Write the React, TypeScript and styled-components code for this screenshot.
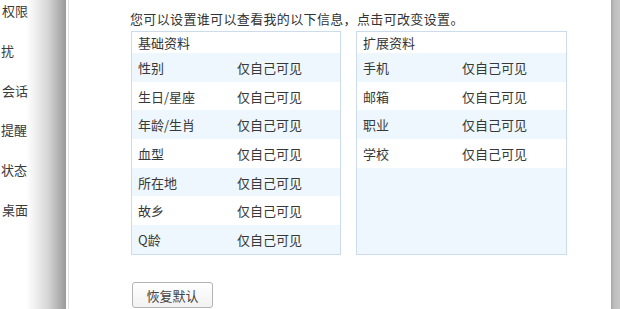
import React from "react";
import styled, { createGlobalStyle } from "styled-components";

const Global = createGlobalStyle`
  html, body { margin: 0; padding: 0; background: #fff; }
  * { box-sizing: border-box; }
`;

const Root = styled.div`
  display: flex;
  width: 620px;
  height: 309px;
  overflow: hidden;
  background: #fff;
  font-family: "Noto Sans CJK SC", "Noto Sans", sans-serif;
  color: #383838;
`;

const Sidebar = styled.div`
  flex: none;
  width: 66px;
  display: flex;
  flex-direction: column;
  margin-top: -9px;
  background: linear-gradient(
    to right,
    #ffffff 0px,
    #ffffff 26px,
    #f2f2f2 34px,
    #d6d6d6 48px,
    #b4b4b4 58px,
    #9a9a9a 66px
  );
`;

const NavItem = styled.div<{ $shift: number }>`
  height: 39.8px;
  line-height: 40px;
  font-size: 13px;
  white-space: nowrap;
  padding-left: ${(p) => p.$shift}px;
  color: #3a3a3a;
`;

const Main = styled.div`
  flex: 1;
  margin-left: 2px;
  border-left: 1px solid #e2e2e2;
  padding: 10px 0 0 61px;
  display: flex;
  flex-direction: column;
`;

const Intro = styled.div`
  font-size: 13px;
  line-height: 17px;
  height: 17px;
  margin-bottom: 4px;
  letter-spacing: 0.35px;
  color: #333;
  white-space: nowrap;
`;

const Tables = styled.div`
  display: grid;
  grid-template-columns: 210px 211px;
  column-gap: 15px;
  margin-left: 1px;
`;

const Table = styled.div`
  height: 224px;
  border: 1px solid #cddcea;
  display: flex;
  flex-direction: column;
  background: #fff;
`;

const Header = styled.div`
  height: 21px;
  line-height: 21px;
  padding-left: 6px;
  font-size: 13px;
  color: #333;
`;

const Row = styled.div<{ $alt: boolean }>`
  display: grid;
  grid-template-columns: 99px 1fr;
  height: 28.7px;
  align-items: center;
  padding-left: 6px;
  font-size: 13px;
  background: ${(p) => (p.$alt ? "#edf7fd" : "#ffffff")};
  cursor: pointer;
`;

const Filler = styled.div`
  flex: 1;
  background: #edf7fd;
`;

const Button = styled.button`
  margin-top: 27px;
  margin-left: 2px;
  width: 81px;
  height: 26px;
  border: 1px solid #b3b3b3;
  border-radius: 3px;
  background: linear-gradient(#ffffff, #f2f2f2);
  font-family: "Noto Sans CJK SC", "Noto Sans", sans-serif;
  font-size: 13px;
  color: #444;
  padding: 0;
  cursor: pointer;
`;

const RightEdge = styled.div`
  flex: none;
  width: 9px;
  background: linear-gradient(to right, #a6a6a6 0px, #bdbdbd 3px, #c6c6c6 9px);
`;

const navItems: { text: string; shift: number }[] = [
  { text: "权限", shift: 2 },
  { text: "扰", shift: 1 },
  { text: "会话", shift: 2 },
  { text: "提醒", shift: 1 },
  { text: "状态", shift: 1 },
  { text: "桌面", shift: 2 },
];

const basic = ["性别", "生日/星座", "年龄/生肖", "血型", "所在地", "故乡", "Q龄"];
const extended = ["手机", "邮箱", "职业", "学校"];

export default function App() {
  return (
    <>
      <Global />
      <Root>
        <Sidebar>
          {navItems.map((n) => (
            <NavItem key={n.text} $shift={n.shift}>
              {n.text}
            </NavItem>
          ))}
        </Sidebar>
        <Main>
          <Intro>您可以设置谁可以查看我的以下信息，点击可改变设置。</Intro>
          <Tables>
            <Table>
              <Header>基础资料</Header>
              {basic.map((label, i) => (
                <Row key={label} $alt={i % 2 === 0}>
                  <span>{label}</span>
                  <span>仅自己可见</span>
                </Row>
              ))}
            </Table>
            <Table>
              <Header>扩展资料</Header>
              {extended.map((label, i) => (
                <Row key={label} $alt={i % 2 === 0}>
                  <span>{label}</span>
                  <span>仅自己可见</span>
                </Row>
              ))}
              <Filler />
            </Table>
          </Tables>
          <div>
            <Button>恢复默认</Button>
          </div>
        </Main>
        <RightEdge />
      </Root>
    </>
  );
}
